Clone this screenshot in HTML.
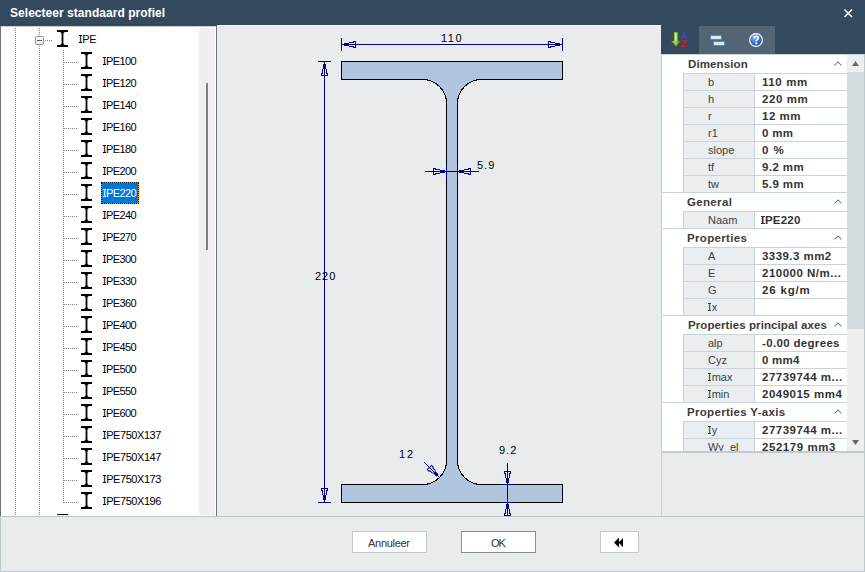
<!DOCTYPE html>
<html><head><meta charset="utf-8"><style>
html,body{margin:0;padding:0;}
body{width:865px;height:572px;overflow:hidden;position:relative;background:#e9eced;font-family:"Liberation Sans", sans-serif;}
.r{position:absolute;}
.t{position:absolute;white-space:nowrap;line-height:13px;font-family:"Liberation Sans", sans-serif;}
svg{position:absolute;left:0;top:0;}
.I{position:relative;margin-right:0.6px}
.I::before,.I::after{content:'';position:absolute;left:0px;width:3px;height:1px;background:currentColor}
.I::before{top:2px}.I::after{top:9px}
.Ib{position:relative;margin-right:0.6px}
.Ib::before,.Ib::after{content:'';position:absolute;left:-0.5px;width:4px;height:1px;background:currentColor}
.Ib::before{top:2px}.Ib::after{top:9px}
</style></head><body>

<div class="r" style="left:0px;top:0px;width:865px;height:25px;background:#35495e;"></div>
<div class="r" style="left:0px;top:25px;width:217px;height:1px;background:#35495e;"></div>
<div class="r" style="left:217px;top:25px;width:444px;height:1px;background:#f4f6f7;"></div>
<div class="r" style="left:0px;top:26px;width:217px;height:490px;background:#ffffff;"></div>
<div class="r" style="left:0px;top:26px;width:1px;height:490px;background:#6d7380;"></div>
<div class="r" style="left:216px;top:26px;width:1px;height:490px;background:#6d7380;"></div>
<div class="r" style="left:1px;top:26px;width:215px;height:1px;background:#c9cdd2;"></div>
<div class="r" style="left:199px;top:28px;width:16px;height:487px;background:#f0f0f0;"></div>
<div class="r" style="left:206px;top:83px;width:2px;height:167px;background:#808080;"></div>
<div class="r" style="left:0px;top:516px;width:865px;height:1px;background:#b9c8cb;"></div>
<div class="r" style="left:0px;top:516px;width:1px;height:56px;background:#b9c8cb;"></div>
<div class="r" style="left:0px;top:571px;width:865px;height:1px;background:#b9c8cb;"></div>
<div class="r" style="left:661px;top:25px;width:204px;height:29px;background:#35495e;"></div>
<div class="r" style="left:699px;top:26px;width:76px;height:28px;background:#536475;"></div>
<div class="r" style="left:661px;top:54px;width:204px;height:397px;background:#ffffff;"></div>
<div class="r" style="left:661px;top:54px;width:1px;height:462px;background:#c3cfd4;"></div>
<div class="r" style="left:847px;top:54px;width:17px;height:397px;background:#eceff0;"></div>
<div class="r" style="left:847px;top:72px;width:17px;height:257px;background:#d5dcdf;"></div>
<div class="t" style="left:688px;top:58px;font-size:11.5px;color:#3b3b3b;font-weight:bold;letter-spacing:0.125px;">Dimension</div>
<div class="r" style="left:684px;top:74px;width:70px;height:16px;background:#eaeef0;"></div>
<div class="t" style="left:708px;top:76px;font-size:11px;color:#404040;">b</div>
<div class="t" style="left:762px;top:76px;font-size:11.5px;color:#333333;font-weight:bold;letter-spacing:0.6px;">110 mm</div>
<div class="r" style="left:683px;top:90px;width:164px;height:1px;background:#c8d4d9;"></div>
<div class="r" style="left:684px;top:91px;width:70px;height:16px;background:#eaeef0;"></div>
<div class="t" style="left:708px;top:93px;font-size:11px;color:#404040;">h</div>
<div class="t" style="left:762px;top:93px;font-size:11.5px;color:#333333;font-weight:bold;letter-spacing:0.6px;">220 mm</div>
<div class="r" style="left:683px;top:107px;width:164px;height:1px;background:#c8d4d9;"></div>
<div class="r" style="left:684px;top:108px;width:70px;height:16px;background:#eaeef0;"></div>
<div class="t" style="left:708px;top:110px;font-size:11px;color:#404040;">r</div>
<div class="t" style="left:762px;top:110px;font-size:11.5px;color:#333333;font-weight:bold;letter-spacing:0.5px;">12 mm</div>
<div class="r" style="left:683px;top:124px;width:164px;height:1px;background:#c8d4d9;"></div>
<div class="r" style="left:684px;top:125px;width:70px;height:16px;background:#eaeef0;"></div>
<div class="t" style="left:708px;top:127px;font-size:11px;color:#404040;">r1</div>
<div class="t" style="left:762px;top:127px;font-size:11.5px;color:#333333;font-weight:bold;letter-spacing:0.333px;">0 mm</div>
<div class="r" style="left:683px;top:141px;width:164px;height:1px;background:#c8d4d9;"></div>
<div class="r" style="left:684px;top:142px;width:70px;height:16px;background:#eaeef0;"></div>
<div class="t" style="left:708px;top:144px;font-size:11px;color:#404040;">slope</div>
<div class="t" style="left:762px;top:144px;font-size:11.5px;color:#333333;font-weight:bold;letter-spacing:1.0px;">0 %</div>
<div class="r" style="left:683px;top:158px;width:164px;height:1px;background:#c8d4d9;"></div>
<div class="r" style="left:684px;top:159px;width:70px;height:16px;background:#eaeef0;"></div>
<div class="t" style="left:708px;top:161px;font-size:11px;color:#404040;">tf</div>
<div class="t" style="left:762px;top:161px;font-size:11.5px;color:#333333;font-weight:bold;letter-spacing:0.4px;">9.2 mm</div>
<div class="r" style="left:683px;top:175px;width:164px;height:1px;background:#c8d4d9;"></div>
<div class="r" style="left:684px;top:176px;width:70px;height:16px;background:#eaeef0;"></div>
<div class="t" style="left:708px;top:178px;font-size:11px;color:#404040;">tw</div>
<div class="t" style="left:762px;top:178px;font-size:11.5px;color:#333333;font-weight:bold;letter-spacing:0.4px;">5.9 mm</div>
<div class="r" style="left:683px;top:192px;width:164px;height:1px;background:#c8d4d9;"></div>
<div class="t" style="left:687px;top:196px;font-size:11.5px;color:#3b3b3b;font-weight:bold;letter-spacing:0.333px;">General</div>
<div class="r" style="left:684px;top:212px;width:70px;height:16px;background:#eaeef0;"></div>
<div class="t" style="left:708px;top:214px;font-size:11px;color:#404040;">Naam</div>
<div class="t" style="left:761px;top:214px;font-size:11.5px;color:#333333;font-weight:bold;letter-spacing:0.2px;"><span class="Ib">I</span>PE220</div>
<div class="r" style="left:683px;top:228px;width:164px;height:1px;background:#c8d4d9;"></div>
<div class="t" style="left:687px;top:232px;font-size:11.5px;color:#3b3b3b;font-weight:bold;letter-spacing:0.333px;">Properties</div>
<div class="r" style="left:684px;top:248px;width:70px;height:16px;background:#eaeef0;"></div>
<div class="t" style="left:708px;top:250px;font-size:11px;color:#404040;">A</div>
<div class="t" style="left:762px;top:250px;font-size:11.5px;color:#333333;font-weight:bold;letter-spacing:0.444px;">3339.3 mm2</div>
<div class="r" style="left:683px;top:264px;width:164px;height:1px;background:#c8d4d9;"></div>
<div class="r" style="left:684px;top:265px;width:70px;height:16px;background:#eaeef0;"></div>
<div class="t" style="left:708px;top:267px;font-size:11px;color:#404040;">E</div>
<div class="t" style="left:762px;top:267px;font-size:11.5px;color:#333333;font-weight:bold;letter-spacing:0.5px;">210000 N/m...</div>
<div class="r" style="left:683px;top:281px;width:164px;height:1px;background:#c8d4d9;"></div>
<div class="r" style="left:684px;top:282px;width:70px;height:16px;background:#eaeef0;"></div>
<div class="t" style="left:708px;top:284px;font-size:11px;color:#404040;">G</div>
<div class="t" style="left:762px;top:284px;font-size:11.5px;color:#333333;font-weight:bold;letter-spacing:0.833px;">26 kg/m</div>
<div class="r" style="left:683px;top:298px;width:164px;height:1px;background:#c8d4d9;"></div>
<div class="r" style="left:684px;top:299px;width:70px;height:16px;background:#eaeef0;"></div>
<div class="t" style="left:708px;top:301px;font-size:11px;color:#404040;"><span class="I">I</span>x</div>
<div class="r" style="left:683px;top:315px;width:164px;height:1px;background:#c8d4d9;"></div>
<div class="t" style="left:688px;top:319px;font-size:11.5px;color:#3b3b3b;font-weight:bold;letter-spacing:0.083px;">Properties principal axes</div>
<div class="r" style="left:684px;top:335px;width:70px;height:16px;background:#eaeef0;"></div>
<div class="t" style="left:708px;top:337px;font-size:11px;color:#404040;">alp</div>
<div class="t" style="left:762px;top:337px;font-size:11.5px;color:#333333;font-weight:bold;letter-spacing:0.333px;">-0.00 degrees</div>
<div class="r" style="left:683px;top:351px;width:164px;height:1px;background:#c8d4d9;"></div>
<div class="r" style="left:684px;top:352px;width:70px;height:16px;background:#eaeef0;"></div>
<div class="t" style="left:708px;top:354px;font-size:11px;color:#404040;">Cyz</div>
<div class="t" style="left:762px;top:354px;font-size:11.5px;color:#333333;font-weight:bold;letter-spacing:0.25px;">0 mm4</div>
<div class="r" style="left:683px;top:368px;width:164px;height:1px;background:#c8d4d9;"></div>
<div class="r" style="left:684px;top:369px;width:70px;height:16px;background:#eaeef0;"></div>
<div class="t" style="left:708px;top:371px;font-size:11px;color:#404040;"><span class="I">I</span>max</div>
<div class="t" style="left:762px;top:371px;font-size:11.5px;color:#333333;font-weight:bold;letter-spacing:0.5px;">27739744 m...</div>
<div class="r" style="left:683px;top:385px;width:164px;height:1px;background:#c8d4d9;"></div>
<div class="r" style="left:684px;top:386px;width:70px;height:16px;background:#eaeef0;"></div>
<div class="t" style="left:708px;top:388px;font-size:11px;color:#404040;"><span class="I">I</span>min</div>
<div class="t" style="left:762px;top:388px;font-size:11.5px;color:#333333;font-weight:bold;letter-spacing:0.5px;">2049015 mm4</div>
<div class="r" style="left:683px;top:402px;width:164px;height:1px;background:#c8d4d9;"></div>
<div class="t" style="left:687px;top:406px;font-size:11.5px;color:#3b3b3b;font-weight:bold;letter-spacing:0.312px;">Properties Y-axis</div>
<div class="r" style="left:684px;top:422px;width:70px;height:16px;background:#eaeef0;"></div>
<div class="t" style="left:708px;top:424px;font-size:11px;color:#404040;"><span class="I">I</span>y</div>
<div class="t" style="left:762px;top:424px;font-size:11.5px;color:#333333;font-weight:bold;letter-spacing:0.5px;">27739744 m...</div>
<div class="r" style="left:683px;top:438px;width:164px;height:1px;background:#c8d4d9;"></div>
<div class="r" style="left:684px;top:439px;width:70px;height:16px;background:#eaeef0;"></div>
<div class="t" style="left:708px;top:441px;font-size:11px;color:#404040;">Wy_el</div>
<div class="t" style="left:762px;top:441px;font-size:11.5px;color:#333333;font-weight:bold;letter-spacing:0.556px;">252179 mm3</div>
<div class="r" style="left:683px;top:455px;width:164px;height:1px;background:#c8d4d9;"></div>
<div class="r" style="left:683px;top:73px;width:164px;height:1px;background:#c8d4d9;"></div>
<div class="r" style="left:683px;top:73px;width:1px;height:119px;background:#c8d4d9;"></div>
<div class="r" style="left:754px;top:73px;width:1px;height:119px;background:#c8d4d9;"></div>
<div class="r" style="left:662px;top:192px;width:185px;height:1px;background:#c8d4d9;"></div>
<div class="r" style="left:683px;top:211px;width:164px;height:1px;background:#c8d4d9;"></div>
<div class="r" style="left:683px;top:211px;width:1px;height:17px;background:#c8d4d9;"></div>
<div class="r" style="left:754px;top:211px;width:1px;height:17px;background:#c8d4d9;"></div>
<div class="r" style="left:662px;top:228px;width:185px;height:1px;background:#c8d4d9;"></div>
<div class="r" style="left:683px;top:247px;width:164px;height:1px;background:#c8d4d9;"></div>
<div class="r" style="left:683px;top:247px;width:1px;height:68px;background:#c8d4d9;"></div>
<div class="r" style="left:754px;top:247px;width:1px;height:68px;background:#c8d4d9;"></div>
<div class="r" style="left:662px;top:315px;width:185px;height:1px;background:#c8d4d9;"></div>
<div class="r" style="left:683px;top:334px;width:164px;height:1px;background:#c8d4d9;"></div>
<div class="r" style="left:683px;top:334px;width:1px;height:68px;background:#c8d4d9;"></div>
<div class="r" style="left:754px;top:334px;width:1px;height:68px;background:#c8d4d9;"></div>
<div class="r" style="left:662px;top:402px;width:185px;height:1px;background:#c8d4d9;"></div>
<div class="r" style="left:683px;top:421px;width:164px;height:1px;background:#c8d4d9;"></div>
<div class="r" style="left:683px;top:421px;width:1px;height:34px;background:#c8d4d9;"></div>
<div class="r" style="left:754px;top:421px;width:1px;height:34px;background:#c8d4d9;"></div>
<div class="r" style="left:662px;top:455px;width:185px;height:1px;background:#c8d4d9;"></div>
<div class="r" style="left:662px;top:54px;width:185px;height:1px;background:#c8d4d9;"></div>
<svg width="865" height="572" viewBox="0 0 865 572" shape-rendering="auto">
<path d="M834.5,65.5 L838,62 L841.5,65.5" fill="none" stroke="#707070" stroke-width="1.05"/>
<path d="M834.5,203.5 L838,200 L841.5,203.5" fill="none" stroke="#707070" stroke-width="1.05"/>
<path d="M834.5,239.5 L838,236 L841.5,239.5" fill="none" stroke="#707070" stroke-width="1.05"/>
<path d="M834.5,326.5 L838,323 L841.5,326.5" fill="none" stroke="#707070" stroke-width="1.05"/>
<path d="M834.5,413.5 L838,410 L841.5,413.5" fill="none" stroke="#707070" stroke-width="1.05"/>
<path d="M852,66 L855.5,61 L859,66 Z" fill="#666"/>
<path d="M852,440 L855.5,445 L859,440 Z" fill="#666"/>
<path d="M844.5,9.5 L852,17 M852,9.5 L844.5,17" stroke="#fff" stroke-width="1.5"/>
<defs><clipPath id="dc"><rect x="217" y="25" width="444" height="491"/></clipPath></defs><g clip-path="url(#dc)">
<path d="M341.5,61.5 H562.5 V79.5 H481.5 A24,24 0 0 0 457.5,103.5 V460.5 A24,24 0 0 0 481.5,484.5 H562.5 V502.5 H341.5 V484.5 H422.5 A24,24 0 0 0 446.5,460.5 V103.5 A24,24 0 0 0 422.5,79.5 H341.5 Z" fill="#b0c4de" stroke="#000" stroke-width="1" shape-rendering="crispEdges"/>
<line x1="341" y1="44.5" x2="563" y2="44.5" stroke="#00008b" stroke-width="1"/>
<line x1="341.5" y1="38" x2="341.5" y2="51" stroke="#00008b" stroke-width="1"/>
<line x1="562.5" y1="38" x2="562.5" y2="51" stroke="#00008b" stroke-width="1"/>
<line x1="324.5" y1="61" x2="324.5" y2="503" stroke="#00008b" stroke-width="1"/>
<line x1="318" y1="61.5" x2="331" y2="61.5" stroke="#00008b" stroke-width="1"/>
<line x1="318" y1="502.5" x2="331" y2="502.5" stroke="#00008b" stroke-width="1"/>
<line x1="425" y1="171.5" x2="479" y2="171.5" stroke="#00008b" stroke-width="1"/>
<line x1="446.5" y1="166" x2="446.5" y2="178" stroke="#00008b" stroke-width="1"/>
<line x1="457.5" y1="166" x2="457.5" y2="178" stroke="#00008b" stroke-width="1"/>
<line x1="507.5" y1="463" x2="507.5" y2="516" stroke="#00008b" stroke-width="1"/>
<line x1="501" y1="484.5" x2="513" y2="484.5" stroke="#00008b" stroke-width="1"/>
<line x1="501" y1="502.5" x2="513" y2="502.5" stroke="#00008b" stroke-width="1"/>
<line x1="424" y1="462" x2="439" y2="477" stroke="#00008b" stroke-width="1"/>
<path d="M345,44h1v1h-1zM344,43h1v1h-1zM355,42h1v1h-1zM355,43h1v1h-1zM344,45h1v1h-1zM346,43h1v1h-1zM355,45h1v1h-1zM346,45h1v1h-1zM350,46h1v1h-1zM352,46h1v1h-1zM348,43h1v1h-1zM348,45h1v1h-1zM353,41h1v1h-1zM355,41h1v1h-1zM353,47h1v1h-1zM344,44h1v1h-1zM355,44h1v1h-1zM355,47h1v1h-1zM346,44h1v1h-1zM350,42h1v1h-1zM349,46h1v1h-1zM352,42h1v1h-1zM351,46h1v1h-1zM347,45h1v1h-1zM348,44h1v1h-1zM347,43h1v1h-1zM353,46h1v1h-1zM345,43h1v1h-1zM355,46h1v1h-1zM345,45h1v1h-1zM349,42h1v1h-1zM351,42h1v1h-1zM354,41h1v1h-1zM354,47h1v1h-1zM347,44h1v1h-1zM353,42h1v1h-1z" fill="#00008b" shape-rendering="crispEdges"/>
<path d="M558,44h1v1h-1zM559,43h1v1h-1zM548,42h1v1h-1zM548,43h1v1h-1zM559,45h1v1h-1zM557,43h1v1h-1zM548,45h1v1h-1zM557,45h1v1h-1zM553,46h1v1h-1zM551,46h1v1h-1zM555,43h1v1h-1zM555,45h1v1h-1zM550,41h1v1h-1zM548,41h1v1h-1zM550,47h1v1h-1zM559,44h1v1h-1zM548,44h1v1h-1zM548,47h1v1h-1zM557,44h1v1h-1zM553,42h1v1h-1zM554,46h1v1h-1zM551,42h1v1h-1zM552,46h1v1h-1zM556,45h1v1h-1zM555,44h1v1h-1zM556,43h1v1h-1zM550,46h1v1h-1zM558,43h1v1h-1zM548,46h1v1h-1zM558,45h1v1h-1zM554,42h1v1h-1zM552,42h1v1h-1zM549,41h1v1h-1zM549,47h1v1h-1zM556,44h1v1h-1zM550,42h1v1h-1z" fill="#00008b" shape-rendering="crispEdges"/>
<path d="M324,65h1v1h-1zM323,64h1v1h-1zM322,75h1v1h-1zM323,75h1v1h-1zM325,64h1v1h-1zM323,66h1v1h-1zM325,75h1v1h-1zM325,66h1v1h-1zM326,70h1v1h-1zM326,72h1v1h-1zM323,68h1v1h-1zM325,68h1v1h-1zM321,73h1v1h-1zM321,75h1v1h-1zM327,73h1v1h-1zM324,64h1v1h-1zM324,75h1v1h-1zM327,75h1v1h-1zM324,66h1v1h-1zM322,70h1v1h-1zM326,69h1v1h-1zM322,72h1v1h-1zM326,71h1v1h-1zM325,67h1v1h-1zM324,68h1v1h-1zM323,67h1v1h-1zM326,73h1v1h-1zM323,65h1v1h-1zM326,75h1v1h-1zM325,65h1v1h-1zM322,69h1v1h-1zM322,71h1v1h-1zM321,74h1v1h-1zM327,74h1v1h-1zM324,67h1v1h-1zM322,73h1v1h-1z" fill="#00008b" shape-rendering="crispEdges"/>
<path d="M324,498h1v1h-1zM323,499h1v1h-1zM322,488h1v1h-1zM323,488h1v1h-1zM325,499h1v1h-1zM323,497h1v1h-1zM325,488h1v1h-1zM325,497h1v1h-1zM326,493h1v1h-1zM326,491h1v1h-1zM323,495h1v1h-1zM325,495h1v1h-1zM321,490h1v1h-1zM321,488h1v1h-1zM327,490h1v1h-1zM324,499h1v1h-1zM324,488h1v1h-1zM327,488h1v1h-1zM324,497h1v1h-1zM322,493h1v1h-1zM326,494h1v1h-1zM322,491h1v1h-1zM326,492h1v1h-1zM325,496h1v1h-1zM324,495h1v1h-1zM323,496h1v1h-1zM326,490h1v1h-1zM323,498h1v1h-1zM326,488h1v1h-1zM325,498h1v1h-1zM322,494h1v1h-1zM322,492h1v1h-1zM321,489h1v1h-1zM327,489h1v1h-1zM324,496h1v1h-1zM322,490h1v1h-1z" fill="#00008b" shape-rendering="crispEdges"/>
<path d="M443,171h1v1h-1zM444,170h1v1h-1zM433,169h1v1h-1zM433,170h1v1h-1zM444,172h1v1h-1zM442,170h1v1h-1zM433,172h1v1h-1zM442,172h1v1h-1zM438,173h1v1h-1zM436,173h1v1h-1zM440,170h1v1h-1zM440,172h1v1h-1zM435,168h1v1h-1zM433,168h1v1h-1zM435,174h1v1h-1zM444,171h1v1h-1zM433,171h1v1h-1zM433,174h1v1h-1zM442,171h1v1h-1zM438,169h1v1h-1zM439,173h1v1h-1zM436,169h1v1h-1zM437,173h1v1h-1zM441,172h1v1h-1zM440,171h1v1h-1zM441,170h1v1h-1zM435,173h1v1h-1zM443,170h1v1h-1zM433,173h1v1h-1zM443,172h1v1h-1zM439,169h1v1h-1zM437,169h1v1h-1zM434,168h1v1h-1zM434,174h1v1h-1zM441,171h1v1h-1zM435,169h1v1h-1z" fill="#00008b" shape-rendering="crispEdges"/>
<path d="M460,171h1v1h-1zM459,170h1v1h-1zM470,169h1v1h-1zM470,170h1v1h-1zM459,172h1v1h-1zM461,170h1v1h-1zM470,172h1v1h-1zM461,172h1v1h-1zM465,173h1v1h-1zM467,173h1v1h-1zM463,170h1v1h-1zM463,172h1v1h-1zM468,168h1v1h-1zM470,168h1v1h-1zM468,174h1v1h-1zM459,171h1v1h-1zM470,171h1v1h-1zM470,174h1v1h-1zM461,171h1v1h-1zM465,169h1v1h-1zM464,173h1v1h-1zM467,169h1v1h-1zM466,173h1v1h-1zM462,172h1v1h-1zM463,171h1v1h-1zM462,170h1v1h-1zM468,173h1v1h-1zM460,170h1v1h-1zM470,173h1v1h-1zM460,172h1v1h-1zM464,169h1v1h-1zM466,169h1v1h-1zM469,168h1v1h-1zM469,174h1v1h-1zM462,171h1v1h-1zM468,169h1v1h-1z" fill="#00008b" shape-rendering="crispEdges"/>
<path d="M507,481h1v1h-1zM506,482h1v1h-1zM505,471h1v1h-1zM506,471h1v1h-1zM508,482h1v1h-1zM506,480h1v1h-1zM508,471h1v1h-1zM508,480h1v1h-1zM509,476h1v1h-1zM509,474h1v1h-1zM506,478h1v1h-1zM508,478h1v1h-1zM504,473h1v1h-1zM504,471h1v1h-1zM510,473h1v1h-1zM507,482h1v1h-1zM507,471h1v1h-1zM510,471h1v1h-1zM507,480h1v1h-1zM505,476h1v1h-1zM509,477h1v1h-1zM505,474h1v1h-1zM509,475h1v1h-1zM508,479h1v1h-1zM507,478h1v1h-1zM506,479h1v1h-1zM509,473h1v1h-1zM506,481h1v1h-1zM509,471h1v1h-1zM508,481h1v1h-1zM505,477h1v1h-1zM505,475h1v1h-1zM504,472h1v1h-1zM510,472h1v1h-1zM507,479h1v1h-1zM505,473h1v1h-1z" fill="#00008b" shape-rendering="crispEdges"/>
<path d="M507,505h1v1h-1zM506,504h1v1h-1zM505,515h1v1h-1zM506,515h1v1h-1zM508,504h1v1h-1zM506,506h1v1h-1zM508,515h1v1h-1zM508,506h1v1h-1zM509,510h1v1h-1zM509,512h1v1h-1zM506,508h1v1h-1zM508,508h1v1h-1zM504,513h1v1h-1zM504,515h1v1h-1zM510,513h1v1h-1zM507,504h1v1h-1zM507,515h1v1h-1zM510,515h1v1h-1zM507,506h1v1h-1zM505,510h1v1h-1zM509,509h1v1h-1zM505,512h1v1h-1zM509,511h1v1h-1zM508,507h1v1h-1zM507,508h1v1h-1zM506,507h1v1h-1zM509,513h1v1h-1zM506,505h1v1h-1zM509,515h1v1h-1zM508,505h1v1h-1zM505,509h1v1h-1zM505,511h1v1h-1zM504,514h1v1h-1zM510,514h1v1h-1zM507,507h1v1h-1zM505,513h1v1h-1z" fill="#00008b" shape-rendering="crispEdges"/>
<g transform="translate(439,477) rotate(-135)"><rect x="2" y="-1.5" width="5" height="3" fill="#00008b"/><path d="M7,-2 H11 V-3 H13.5 V3 H11 V2 H7" fill="none" stroke="#00008b" stroke-width="1"/></g>
</g>
<line x1="15.5" y1="28" x2="15.5" y2="515" stroke="#808080" stroke-width="1" stroke-dasharray="1 1"/>
<line x1="39.5" y1="28" x2="39.5" y2="35" stroke="#808080" stroke-width="1" stroke-dasharray="1 1"/>
<line x1="39.5" y1="46" x2="39.5" y2="515" stroke="#808080" stroke-width="1" stroke-dasharray="1 1"/>
<line x1="63.5" y1="50" x2="63.5" y2="503" stroke="#808080" stroke-width="1" stroke-dasharray="1 1"/>
<line x1="45" y1="40.5" x2="53" y2="40.5" stroke="#808080" stroke-width="1" stroke-dasharray="1 1"/>
<path transform="translate(57,30)" d="M0,0 H11 V2 H8.4 Q6.4,2 6.4,4 V13 Q6.4,15 8.4,15 H11 V17 H0 V15 H2.6 Q4.6,15 4.6,13 V4 Q4.6,2 2.6,2 H0 Z" fill="#000"/>
<line x1="64" y1="62.5" x2="77" y2="62.5" stroke="#808080" stroke-width="1" stroke-dasharray="1 1"/>
<path transform="translate(81,52)" d="M0,0 H11 V2 H8.4 Q6.4,2 6.4,4 V13 Q6.4,15 8.4,15 H11 V17 H0 V15 H2.6 Q4.6,15 4.6,13 V4 Q4.6,2 2.6,2 H0 Z" fill="#000"/>
<line x1="64" y1="84.5" x2="77" y2="84.5" stroke="#808080" stroke-width="1" stroke-dasharray="1 1"/>
<path transform="translate(81,74)" d="M0,0 H11 V2 H8.4 Q6.4,2 6.4,4 V13 Q6.4,15 8.4,15 H11 V17 H0 V15 H2.6 Q4.6,15 4.6,13 V4 Q4.6,2 2.6,2 H0 Z" fill="#000"/>
<line x1="64" y1="106.5" x2="77" y2="106.5" stroke="#808080" stroke-width="1" stroke-dasharray="1 1"/>
<path transform="translate(81,96)" d="M0,0 H11 V2 H8.4 Q6.4,2 6.4,4 V13 Q6.4,15 8.4,15 H11 V17 H0 V15 H2.6 Q4.6,15 4.6,13 V4 Q4.6,2 2.6,2 H0 Z" fill="#000"/>
<line x1="64" y1="128.5" x2="77" y2="128.5" stroke="#808080" stroke-width="1" stroke-dasharray="1 1"/>
<path transform="translate(81,118)" d="M0,0 H11 V2 H8.4 Q6.4,2 6.4,4 V13 Q6.4,15 8.4,15 H11 V17 H0 V15 H2.6 Q4.6,15 4.6,13 V4 Q4.6,2 2.6,2 H0 Z" fill="#000"/>
<line x1="64" y1="150.5" x2="77" y2="150.5" stroke="#808080" stroke-width="1" stroke-dasharray="1 1"/>
<path transform="translate(81,140)" d="M0,0 H11 V2 H8.4 Q6.4,2 6.4,4 V13 Q6.4,15 8.4,15 H11 V17 H0 V15 H2.6 Q4.6,15 4.6,13 V4 Q4.6,2 2.6,2 H0 Z" fill="#000"/>
<line x1="64" y1="172.5" x2="77" y2="172.5" stroke="#808080" stroke-width="1" stroke-dasharray="1 1"/>
<path transform="translate(81,162)" d="M0,0 H11 V2 H8.4 Q6.4,2 6.4,4 V13 Q6.4,15 8.4,15 H11 V17 H0 V15 H2.6 Q4.6,15 4.6,13 V4 Q4.6,2 2.6,2 H0 Z" fill="#000"/>
<line x1="64" y1="194.5" x2="77" y2="194.5" stroke="#808080" stroke-width="1" stroke-dasharray="1 1"/>
<path transform="translate(81,184)" d="M0,0 H11 V2 H8.4 Q6.4,2 6.4,4 V13 Q6.4,15 8.4,15 H11 V17 H0 V15 H2.6 Q4.6,15 4.6,13 V4 Q4.6,2 2.6,2 H0 Z" fill="#000"/>
<line x1="64" y1="216.5" x2="77" y2="216.5" stroke="#808080" stroke-width="1" stroke-dasharray="1 1"/>
<path transform="translate(81,206)" d="M0,0 H11 V2 H8.4 Q6.4,2 6.4,4 V13 Q6.4,15 8.4,15 H11 V17 H0 V15 H2.6 Q4.6,15 4.6,13 V4 Q4.6,2 2.6,2 H0 Z" fill="#000"/>
<line x1="64" y1="238.5" x2="77" y2="238.5" stroke="#808080" stroke-width="1" stroke-dasharray="1 1"/>
<path transform="translate(81,228)" d="M0,0 H11 V2 H8.4 Q6.4,2 6.4,4 V13 Q6.4,15 8.4,15 H11 V17 H0 V15 H2.6 Q4.6,15 4.6,13 V4 Q4.6,2 2.6,2 H0 Z" fill="#000"/>
<line x1="64" y1="260.5" x2="77" y2="260.5" stroke="#808080" stroke-width="1" stroke-dasharray="1 1"/>
<path transform="translate(81,250)" d="M0,0 H11 V2 H8.4 Q6.4,2 6.4,4 V13 Q6.4,15 8.4,15 H11 V17 H0 V15 H2.6 Q4.6,15 4.6,13 V4 Q4.6,2 2.6,2 H0 Z" fill="#000"/>
<line x1="64" y1="282.5" x2="77" y2="282.5" stroke="#808080" stroke-width="1" stroke-dasharray="1 1"/>
<path transform="translate(81,272)" d="M0,0 H11 V2 H8.4 Q6.4,2 6.4,4 V13 Q6.4,15 8.4,15 H11 V17 H0 V15 H2.6 Q4.6,15 4.6,13 V4 Q4.6,2 2.6,2 H0 Z" fill="#000"/>
<line x1="64" y1="304.5" x2="77" y2="304.5" stroke="#808080" stroke-width="1" stroke-dasharray="1 1"/>
<path transform="translate(81,294)" d="M0,0 H11 V2 H8.4 Q6.4,2 6.4,4 V13 Q6.4,15 8.4,15 H11 V17 H0 V15 H2.6 Q4.6,15 4.6,13 V4 Q4.6,2 2.6,2 H0 Z" fill="#000"/>
<line x1="64" y1="326.5" x2="77" y2="326.5" stroke="#808080" stroke-width="1" stroke-dasharray="1 1"/>
<path transform="translate(81,316)" d="M0,0 H11 V2 H8.4 Q6.4,2 6.4,4 V13 Q6.4,15 8.4,15 H11 V17 H0 V15 H2.6 Q4.6,15 4.6,13 V4 Q4.6,2 2.6,2 H0 Z" fill="#000"/>
<line x1="64" y1="348.5" x2="77" y2="348.5" stroke="#808080" stroke-width="1" stroke-dasharray="1 1"/>
<path transform="translate(81,338)" d="M0,0 H11 V2 H8.4 Q6.4,2 6.4,4 V13 Q6.4,15 8.4,15 H11 V17 H0 V15 H2.6 Q4.6,15 4.6,13 V4 Q4.6,2 2.6,2 H0 Z" fill="#000"/>
<line x1="64" y1="370.5" x2="77" y2="370.5" stroke="#808080" stroke-width="1" stroke-dasharray="1 1"/>
<path transform="translate(81,360)" d="M0,0 H11 V2 H8.4 Q6.4,2 6.4,4 V13 Q6.4,15 8.4,15 H11 V17 H0 V15 H2.6 Q4.6,15 4.6,13 V4 Q4.6,2 2.6,2 H0 Z" fill="#000"/>
<line x1="64" y1="392.5" x2="77" y2="392.5" stroke="#808080" stroke-width="1" stroke-dasharray="1 1"/>
<path transform="translate(81,382)" d="M0,0 H11 V2 H8.4 Q6.4,2 6.4,4 V13 Q6.4,15 8.4,15 H11 V17 H0 V15 H2.6 Q4.6,15 4.6,13 V4 Q4.6,2 2.6,2 H0 Z" fill="#000"/>
<line x1="64" y1="414.5" x2="77" y2="414.5" stroke="#808080" stroke-width="1" stroke-dasharray="1 1"/>
<path transform="translate(81,404)" d="M0,0 H11 V2 H8.4 Q6.4,2 6.4,4 V13 Q6.4,15 8.4,15 H11 V17 H0 V15 H2.6 Q4.6,15 4.6,13 V4 Q4.6,2 2.6,2 H0 Z" fill="#000"/>
<line x1="64" y1="436.5" x2="77" y2="436.5" stroke="#808080" stroke-width="1" stroke-dasharray="1 1"/>
<path transform="translate(81,426)" d="M0,0 H11 V2 H8.4 Q6.4,2 6.4,4 V13 Q6.4,15 8.4,15 H11 V17 H0 V15 H2.6 Q4.6,15 4.6,13 V4 Q4.6,2 2.6,2 H0 Z" fill="#000"/>
<line x1="64" y1="458.5" x2="77" y2="458.5" stroke="#808080" stroke-width="1" stroke-dasharray="1 1"/>
<path transform="translate(81,448)" d="M0,0 H11 V2 H8.4 Q6.4,2 6.4,4 V13 Q6.4,15 8.4,15 H11 V17 H0 V15 H2.6 Q4.6,15 4.6,13 V4 Q4.6,2 2.6,2 H0 Z" fill="#000"/>
<line x1="64" y1="480.5" x2="77" y2="480.5" stroke="#808080" stroke-width="1" stroke-dasharray="1 1"/>
<path transform="translate(81,470)" d="M0,0 H11 V2 H8.4 Q6.4,2 6.4,4 V13 Q6.4,15 8.4,15 H11 V17 H0 V15 H2.6 Q4.6,15 4.6,13 V4 Q4.6,2 2.6,2 H0 Z" fill="#000"/>
<line x1="64" y1="502.5" x2="77" y2="502.5" stroke="#808080" stroke-width="1" stroke-dasharray="1 1"/>
<path transform="translate(81,492)" d="M0,0 H11 V2 H8.4 Q6.4,2 6.4,4 V13 Q6.4,15 8.4,15 H11 V17 H0 V15 H2.6 Q4.6,15 4.6,13 V4 Q4.6,2 2.6,2 H0 Z" fill="#000"/>
<rect x="57" y="514" width="11" height="1" fill="#000"/>
<defs><linearGradient id="eg" x1="0" y1="0" x2="0" y2="1"><stop offset="0" stop-color="#fff"/><stop offset="1" stop-color="#e4e4e4"/></linearGradient></defs>
<rect x="35.5" y="36.5" width="8" height="8" rx="1" fill="url(#eg)" stroke="#8e8f8f"/>
<rect x="37" y="40" width="5" height="1" fill="#3c5bab"/>
<defs><linearGradient id="ag" x1="0" y1="0" x2="1" y2="0"><stop offset="0" stop-color="#c8ec70"/><stop offset="1" stop-color="#5f9f12"/></linearGradient></defs>
<path d="M674,32 H678 V41 H680.5 L676,46.5 L671.5,41 H674 Z" fill="url(#ag)" stroke="#3e7a0e" stroke-width="0.5"/>
<rect x="675" y="33" width="1.5" height="8" fill="#d8f08a"/>
<path d="M681.2,39.5 L684,32.3 L686.8,39.5 M682.2,37 H685.8" fill="none" stroke="#3a4ea6" stroke-width="1.5"/>
<path d="M681.5,40.8 H686.5 L681.8,46.3 H687" fill="none" stroke="#c42424" stroke-width="1.4"/>
<rect x="710.5" y="35.5" width="11" height="4" fill="#d6ecfc" stroke="#4f86c6"/>
<rect x="713.5" y="41.5" width="11" height="4" fill="#d6ecfc" stroke="#4f86c6"/>
<defs><radialGradient id="hg" cx="0.4" cy="0.3" r="0.8"><stop offset="0" stop-color="#8fb6ee"/><stop offset="0.5" stop-color="#3f74c8"/><stop offset="1" stop-color="#23499a"/></radialGradient></defs>
<circle cx="756" cy="40" r="6.4" fill="url(#hg)" stroke="#fff" stroke-width="1.1"/>
<path d="M754,38.3 Q754,36.2 756.2,36.2 Q758.3,36.2 758.3,38.1 Q758.3,39.3 757,39.9 Q756.2,40.3 756.2,41.3" fill="none" stroke="#fff" stroke-width="1.6"/>
<rect x="755.3" y="42.4" width="1.9" height="1.8" fill="#fff"/>
<rect x="352.5" y="531.5" width="74" height="21" fill="#fff" stroke="#c0cacf"/>
<rect x="461.5" y="531.5" width="74" height="21" fill="#fff" stroke="#8c8c8c"/>
<rect x="600.5" y="531.5" width="38" height="21" fill="#fff" stroke="#c0cacf"/>
<path d="M614,542.5 L619,537.5 V547.5 Z M618.5,542.5 L623,538 V547 Z" fill="#000"/>
</svg>
<div class="t" style="left:10px;top:7px;font-size:12px;color:#fff;font-weight:bold;letter-spacing:0.038px;">Selecteer standaard profiel</div>
<div class="r" style="left:101px;top:182px;width:38px;height:22px;background:linear-gradient(#0078d7,#0078d7) padding-box, linear-gradient(#ff8a22,#ff8a22) border-box;box-sizing:border-box;border:1px dotted #000;"></div>
<div class="t" style="left:79px;top:33px;font-size:11px;color:#000;letter-spacing:-0.4px;"><span class="I">I</span>PE</div>
<div class="t" style="left:103px;top:55px;font-size:11px;color:#000;letter-spacing:-0.6px;"><span class="I">I</span>PE100</div>
<div class="t" style="left:103px;top:77px;font-size:11px;color:#000;letter-spacing:-0.6px;"><span class="I">I</span>PE120</div>
<div class="t" style="left:103px;top:99px;font-size:11px;color:#000;letter-spacing:-0.6px;"><span class="I">I</span>PE140</div>
<div class="t" style="left:103px;top:121px;font-size:11px;color:#000;letter-spacing:-0.6px;"><span class="I">I</span>PE160</div>
<div class="t" style="left:103px;top:143px;font-size:11px;color:#000;letter-spacing:-0.6px;"><span class="I">I</span>PE180</div>
<div class="t" style="left:103px;top:165px;font-size:11px;color:#000;letter-spacing:-0.6px;"><span class="I">I</span>PE200</div>
<div class="t" style="left:103px;top:187px;font-size:11px;color:#fff;letter-spacing:-0.6px;"><span class="I">I</span>PE220</div>
<div class="t" style="left:103px;top:209px;font-size:11px;color:#000;letter-spacing:-0.6px;"><span class="I">I</span>PE240</div>
<div class="t" style="left:103px;top:231px;font-size:11px;color:#000;letter-spacing:-0.6px;"><span class="I">I</span>PE270</div>
<div class="t" style="left:103px;top:253px;font-size:11px;color:#000;letter-spacing:-0.6px;"><span class="I">I</span>PE300</div>
<div class="t" style="left:103px;top:275px;font-size:11px;color:#000;letter-spacing:-0.6px;"><span class="I">I</span>PE330</div>
<div class="t" style="left:103px;top:297px;font-size:11px;color:#000;letter-spacing:-0.6px;"><span class="I">I</span>PE360</div>
<div class="t" style="left:103px;top:319px;font-size:11px;color:#000;letter-spacing:-0.6px;"><span class="I">I</span>PE400</div>
<div class="t" style="left:103px;top:341px;font-size:11px;color:#000;letter-spacing:-0.6px;"><span class="I">I</span>PE450</div>
<div class="t" style="left:103px;top:363px;font-size:11px;color:#000;letter-spacing:-0.6px;"><span class="I">I</span>PE500</div>
<div class="t" style="left:103px;top:385px;font-size:11px;color:#000;letter-spacing:-0.6px;"><span class="I">I</span>PE550</div>
<div class="t" style="left:103px;top:407px;font-size:11px;color:#000;letter-spacing:-0.6px;"><span class="I">I</span>PE600</div>
<div class="t" style="left:103px;top:429px;font-size:11px;color:#000;letter-spacing:-0.444px;"><span class="I">I</span>PE750X137</div>
<div class="t" style="left:103px;top:451px;font-size:11px;color:#000;letter-spacing:-0.444px;"><span class="I">I</span>PE750X147</div>
<div class="t" style="left:103px;top:473px;font-size:11px;color:#000;letter-spacing:-0.444px;"><span class="I">I</span>PE750X173</div>
<div class="t" style="left:103px;top:495px;font-size:11px;color:#000;letter-spacing:-0.444px;"><span class="I">I</span>PE750X196</div>
<div class="t" style="left:441px;top:32px;font-size:11px;color:#000;letter-spacing:1.5px;">110</div>
<div class="t" style="left:477px;top:159px;font-size:11px;color:#000;letter-spacing:1.0px;">5.9</div>
<div class="t" style="left:315px;top:270px;font-size:11px;color:#000;letter-spacing:1.0px;">220</div>
<div class="t" style="left:399px;top:448px;font-size:11px;color:#000;letter-spacing:2.0px;">12</div>
<div class="t" style="left:499px;top:444px;font-size:11px;color:#000;letter-spacing:1.0px;">9.2</div>
<div class="t" style="left:368px;top:537px;font-size:11px;color:#333;letter-spacing:-0.286px;">Annuleer</div>
<div class="t" style="left:491px;top:537px;font-size:11px;color:#333;letter-spacing:-1.0px;">OK</div>
<div class="r" style="left:661px;top:451px;width:203px;height:2px;background:#c0ccd0;"></div>
<div class="r" style="left:864px;top:54px;width:1px;height:518px;background:#bccacd;"></div>
<div class="r" style="left:847px;top:54px;width:17px;height:1px;background:#c8d4d9;"></div>
<div class="r" style="left:662px;top:453px;width:202px;height:63px;background:#e9eced;"></div>
</body></html>
